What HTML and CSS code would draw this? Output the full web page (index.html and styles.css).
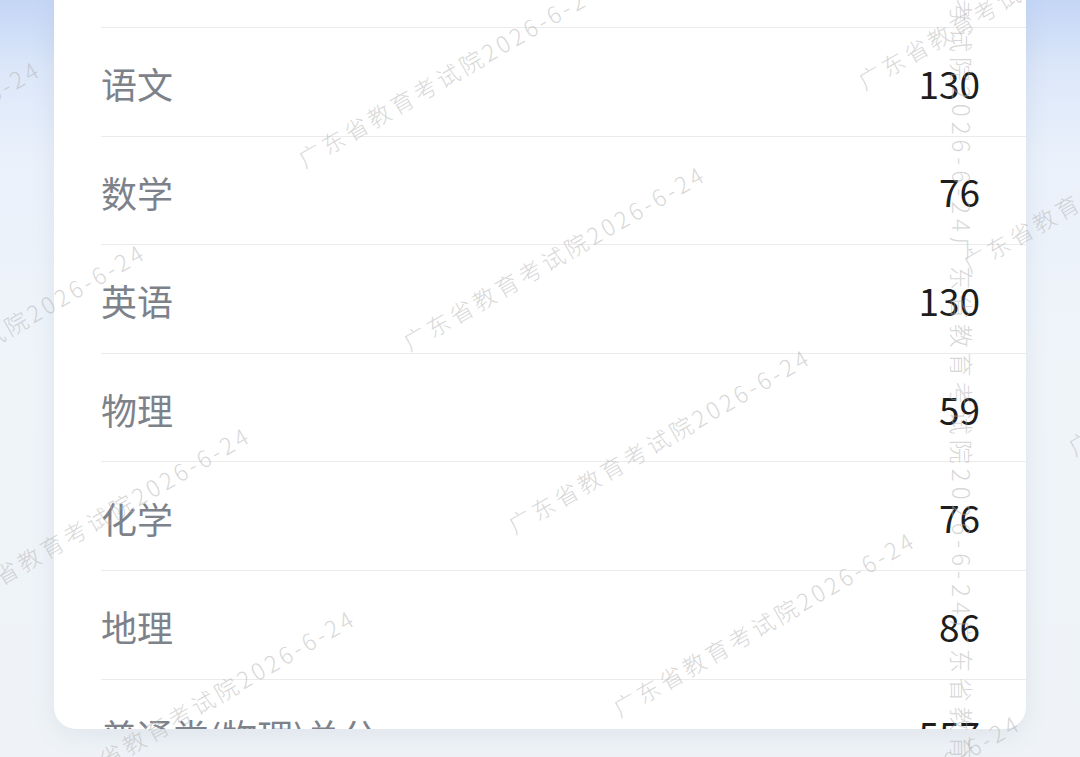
FILE: index.html
```html
<!DOCTYPE html>
<html lang="zh-CN">
<head>
<meta charset="utf-8">
<title>成绩</title>
<link rel="stylesheet" href="styles.css">
</head>
<body>
<div class="page">
  <div class="card">
    <div class="list">
      <div class="row spacer"></div>
      <div class="row"><span class="label">语文</span><span class="score">130</span></div>
      <div class="row"><span class="label">数学</span><span class="score">76</span></div>
      <div class="row"><span class="label">英语</span><span class="score">130</span></div>
      <div class="row"><span class="label">物理</span><span class="score">59</span></div>
      <div class="row"><span class="label">化学</span><span class="score">76</span></div>
      <div class="row"><span class="label">地理</span><span class="score">86</span></div>
      <div class="row"><span class="label">普通类(物理)总分</span><span class="score">557</span></div>
    </div>
  </div>
</div>
<div class="watermarks">
  <span class="wm" style="left:-365px;top:44px">广东省教育考试院2026-6-24</span>
  <span class="wm" style="left:-260px;top:227px">广东省教育考试院2026-6-24</span>
  <span class="wm" style="left:-155px;top:410px">广东省教育考试院2026-6-24</span>
  <span class="wm" style="left:-50px;top:593px">广东省教育考试院2026-6-24</span>
  <span class="wm" style="left:55px;top:776px">广东省教育考试院2026-6-24</span>
  <span class="wm" style="left:195px;top:-34px">广东省教育考试院2026-6-24</span>
  <span class="wm" style="left:300px;top:149px">广东省教育考试院2026-6-24</span>
  <span class="wm" style="left:405px;top:332px">广东省教育考试院2026-6-24</span>
  <span class="wm" style="left:510px;top:515px">广东省教育考试院2026-6-24</span>
  <span class="wm" style="left:615px;top:698px">广东省教育考试院2026-6-24</span>
  <span class="wm" style="left:720px;top:881px">广东省教育考试院2026-6-24</span>
  <span class="wm" style="left:860px;top:71px">广东省教育考试院2026-6-24</span>
  <span class="wm" style="left:965px;top:254px">广东省教育考试院2026-6-24</span>
  <span class="wm" style="left:1070px;top:437px">广东省教育考试院2026-6-24</span>
  <span class="wm wm-vertical" style="left:950px;top:-146px">广东省教育考试院2026-6-24广东省教育考试院2026-6-24广东省教育考试院2026-6-24</span>
</div>
</body>
</html>
```
FILE: styles.css
```css
html, body {
  margin: 0;
  padding: 0;
}

body {
  width: 1080px;
  height: 757px;
  overflow: hidden;
  position: relative;
  background: linear-gradient(180deg, #c4d6f6 0px, #dce7f9 70px, #eaf1fb 160px, #eff4f9 360px, #eff3f7 100%);
  font-family: "Noto Sans CJK SC", "Noto Sans", sans-serif;
}

.page {
  box-sizing: border-box;
  width: 1080px;
  height: 757px;
  padding-left: 54px;
}

.card {
  box-sizing: border-box;
  width: 972px;
  height: 729px;
  background: #ffffff;
  border-radius: 0 0 22px 22px;
  overflow: hidden;
  box-shadow: 0 6px 24px rgba(110, 130, 160, 0.12);
}

.list {
  margin-left: 47px;
}

.row {
  box-sizing: border-box;
  display: flex;
  align-items: center;
  justify-content: space-between;
  height: 108.6px;
  padding-right: 46px;
  border-bottom: 1px solid #ebebeb;
}

.row.spacer {
  height: 28px;
}

.label {
  font-size: 36px;
  color: #7d828a;
  line-height: 1;
  padding-top: 3px;
}

.score {
  font-size: 37px;
  color: #1d1d1d;
  line-height: 1;
  padding-top: 3px;
}

.watermarks {
  position: absolute;
  left: 0;
  top: 0;
  width: 1080px;
  height: 757px;
  overflow: hidden;
  pointer-events: none;
}

.wm {
  position: absolute;
  white-space: nowrap;
  font-size: 23px;
  line-height: 23px;
  letter-spacing: 3.5px;
  font-weight: 300;
  color: rgba(175, 175, 175, 0.5);
  transform: rotate(-30deg);
  transform-origin: 0 50%;
}

.wm-vertical {
  transform: none;
  writing-mode: vertical-rl;
  text-orientation: sideways;
  font-size: 24px;
  line-height: 24px;
  letter-spacing: 5px;
}
```
